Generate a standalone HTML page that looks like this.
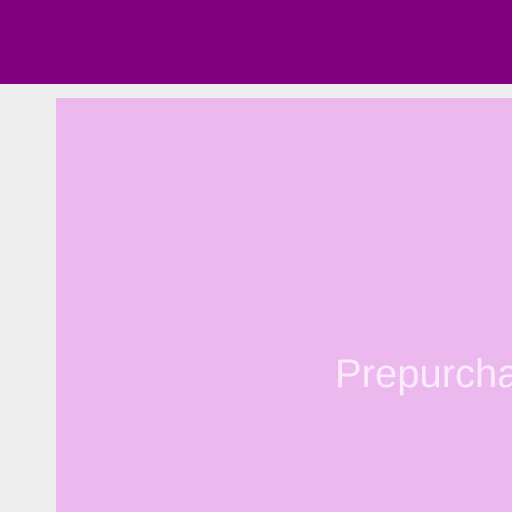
<!DOCTYPE html>
<html><head><style>
html,body{margin:0;padding:0;width:512px;height:512px;overflow:hidden;background:#eeeeee;}
.top{position:absolute;left:0;top:0;width:512px;height:84px;background:#800080;}
.card{position:absolute;left:56px;top:98px;width:456px;height:414px;background:#ebb9ed;overflow:hidden;}
.t{position:absolute;left:279px;top:252px;font-family:"Liberation Sans",sans-serif;font-size:40px;color:#fce9fc;white-space:nowrap;line-height:48px;}
</style></head><body>
<div class="top"></div>
<div class="card"><div class="t">Prepurchase</div></div>
</body></html>
